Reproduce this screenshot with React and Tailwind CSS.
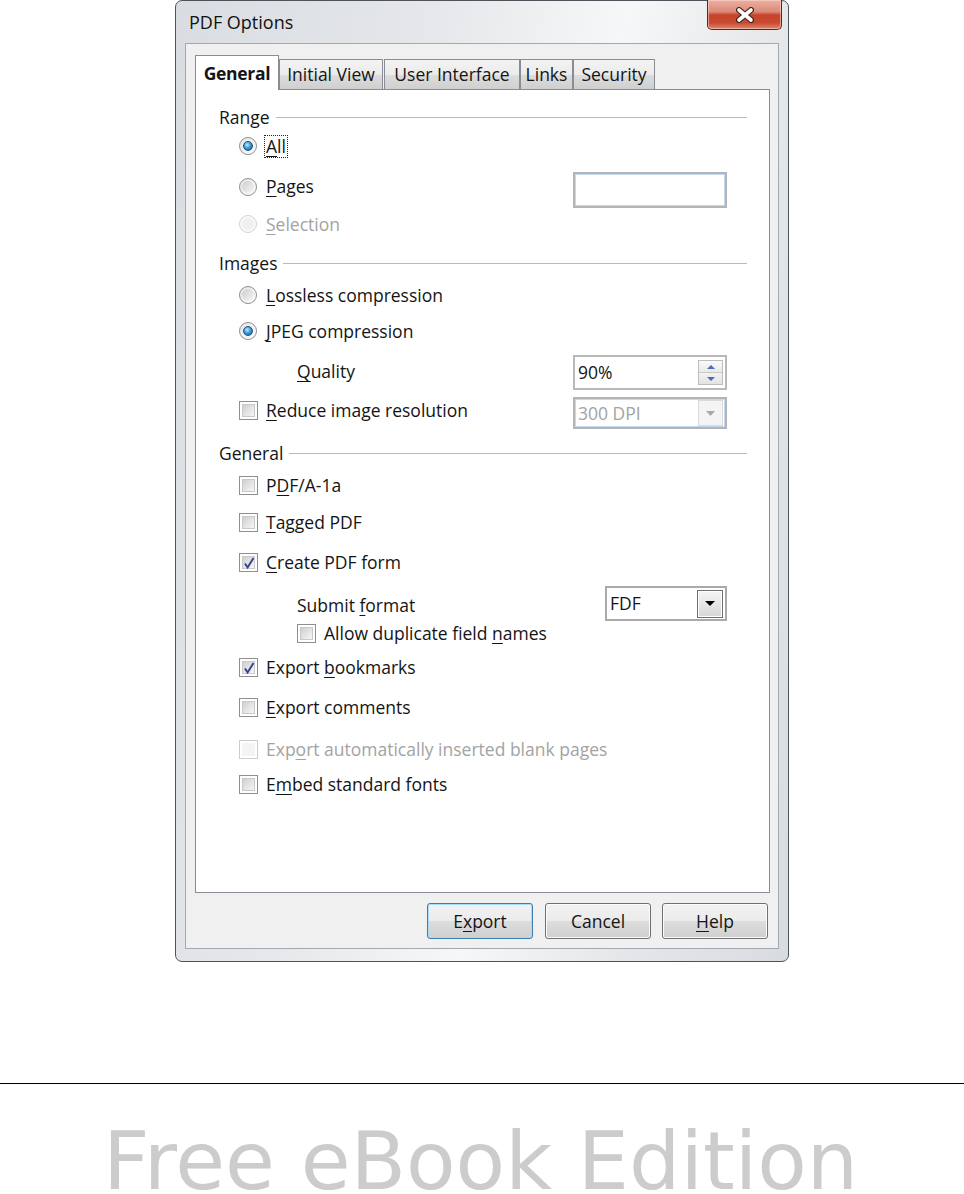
import React from "react";

const U = ({ children }) => (
  <span className="underline decoration-1 underline-offset-[3px]">{children}</span>
);

function Radio({ checked = false, disabled = false }) {
  if (disabled) {
    return (
      <span className="flex h-[18px] w-[18px] shrink-0 items-center justify-center rounded-full border border-[#d4d4d4] bg-[#f8f8f8]">
        <span className="h-[12px] w-[12px] rounded-full bg-[#f0f0f0]" />
      </span>
    );
  }
  return (
    <span className="flex h-[18px] w-[18px] shrink-0 items-center justify-center rounded-full border border-[#8e8f8f] bg-[linear-gradient(135deg,#e4e4e4,#ffffff)]">
      {checked ? (
        <span className="h-[10px] w-[10px] rounded-full border border-[#1b4f7e] bg-[radial-gradient(circle_at_40%_35%,#c4ecff_0%,#3d9ddb_45%,#14578c_100%)]" />
      ) : (
        <span className="h-[12px] w-[12px] rounded-full bg-[linear-gradient(135deg,#cdcdcd,#f7f7f7)]" />
      )}
    </span>
  );
}

function Check({ checked = false, disabled = false }) {
  return (
    <span
      className={
        disabled
          ? "relative flex h-[19px] w-[19px] shrink-0 items-center justify-center border border-[#cdcdcd] bg-white"
          : "relative flex h-[19px] w-[19px] shrink-0 items-center justify-center border border-[#8e8f8f] bg-white"
      }
    >
      <span
        className={
          disabled
            ? "h-[13px] w-[13px] bg-[#f4f4f4]"
            : "h-[13px] w-[13px] border border-[#c9c9c9] bg-[linear-gradient(135deg,#d0d0d0,#f6f6f6)]"
        }
      />
      {checked && (
        <svg className="absolute left-[2px] top-[2px]" width="14" height="14" viewBox="0 0 14 14">
          <path d="M3 7.5 L5.6 11.5 L11.5 2" fill="none" stroke="#34478a" strokeWidth="2" />
        </svg>
      )}
    </span>
  );
}

function Section({ title, mt }) {
  return (
    <div className={`${mt} flex h-[24px] items-center pl-[23px] pr-[22px]`}>
      <span>{title}</span>
      <span className="ml-[6px] h-px flex-1 bg-[#b9b9b9]" />
    </div>
  );
}

function Tri({ color = "#000", up = false, w = 9, h = 5 }) {
  return (
    <svg width={w} height={h} viewBox={`0 0 ${w} ${h}`}>
      {up ? (
        <polygon points={`0,${h} ${w},${h} ${w / 2},0`} fill={color} />
      ) : (
        <polygon points={`0,0 ${w},0 ${w / 2},${h}`} fill={color} />
      )}
    </svg>
  );
}

function Tab({ label, w, selected }) {
  if (selected) {
    return (
      <div
        className={`${w} relative z-10 -mb-px flex h-[35px] items-center justify-center border border-b-0 border-[#898c95] bg-white font-bold tracking-[-0.3px]`}
      >
        {label}
      </div>
    );
  }
  return (
    <div
      className={`${w} flex h-[30px] items-center justify-center border border-b-0 border-[#898c95] bg-[linear-gradient(#f3f3f3_0%,#ebebeb_50%,#dddddd_51%,#cfcfcf_100%)]`}
    >
      {label}
    </div>
  );
}

function Btn({ children, focused }) {
  return (
    <div
      className={
        focused
          ? "flex h-[36px] w-[106px] items-center justify-center rounded-[3px] border border-[#3c7fb1] bg-[linear-gradient(#f2f2f2_0%,#ebebeb_50%,#dddddd_51%,#cfcfcf_100%)] shadow-[inset_0_0_0_1px_#a8dcf6]"
          : "flex h-[36px] w-[106px] items-center justify-center rounded-[3px] border border-[#707070] bg-[linear-gradient(#f2f2f2_0%,#ebebeb_50%,#dddddd_51%,#cfcfcf_100%)] shadow-[inset_0_0_0_1px_#fbfbfb]"
      }
    >
      {children}
    </div>
  );
}

export default function App() {
  return (
    <div className="h-[1194px] w-[964px] bg-white font-['Open_Sans',sans-serif] text-[17.5px] text-[#141414]">
      {/* Window */}
      <div className="ml-[175px] flex h-[962px] w-[614px] flex-col rounded-[7px] border border-[#4d535a] bg-[linear-gradient(100deg,#d9dde1_0%,#e6e8eb_35%,#f6f7f8_58%,#e5e7ea_78%,#d8dce0_100%)]">
        {/* Title bar */}
        <div className="flex h-[42px] items-start">
          <div className="pl-[13px] pt-[10px] text-[18px] leading-[22px] text-[#111]">PDF Options</div>
          <div className="-mt-px ml-auto mr-[6px] flex h-[30px] w-[75px] items-center justify-center rounded-b-[5px] border border-t-0 border-[#5b2519] bg-[linear-gradient(#eab0a2_0%,#dc8b78_40%,#c7432c_52%,#c84a31_78%,#e0856c_100%)] shadow-[inset_0_0_0_1px_rgba(255,220,210,0.55)]">
            <svg width="22" height="16" viewBox="0 0 22 16">
              <path d="M5 3 L17 13 M17 3 L5 13" stroke="#45231c" strokeWidth="6" strokeLinecap="round" />
              <path d="M5 3 L17 13 M17 3 L5 13" stroke="#ffffff" strokeWidth="3.6" strokeLinecap="round" />
            </svg>
          </div>
        </div>

        {/* Client area */}
        <div className="mx-[9px] flex h-[906px] flex-col border border-[#a3a9b0] bg-[#f0f0f0]">
          {/* Tabs */}
          <div className="ml-[9px] mt-[11px] flex h-[34px] items-end">
            <Tab label="General" w="w-[84px]" selected />
            <Tab label="Initial View" w="w-[104px]" />
            <div className="w-px" />
            <Tab label="User Interface" w="w-[136px]" />
            <Tab label="Links" w="w-[53px]" />
            <Tab label="Security" w="w-[82px]" />
          </div>

          {/* Pane */}
          <div className="ml-[9px] flex h-[804px] w-[575px] flex-col border border-[#898c95] bg-white">
            <Section title="Range" mt="mt-[15px]" />

            <div className="mt-[5px] flex h-[24px] items-center pl-[43px]">
              <Radio checked />
              <span className="ml-[7px] border border-dotted border-[#222] px-px leading-[21px]">
                <U>A</U>ll
              </span>
            </div>

            <div className="mt-[14px] flex h-[36px] items-start pl-[43px]">
              <div className="flex h-[29px] w-[334px] items-center">
                <Radio />
                <span className="ml-[9px]">
                  <U>P</U>ages
                </span>
              </div>
              <div className="h-[36px] w-[154px] border-2 border-[#b4b4b4] bg-white shadow-[inset_0_0_0_1px_#c3d9f1]" />
            </div>

            <div className="mt-[4px] flex h-[24px] items-center pl-[43px] text-[#a3a3a3]">
              <Radio disabled />
              <span className="ml-[9px]">
                <U>S</U>election
              </span>
            </div>

            <Section title="Images" mt="mt-[15px]" />

            <div className="mt-[8px] flex h-[24px] items-center pl-[43px]">
              <Radio />
              <span className="ml-[9px]">
                <U>L</U>ossless compression
              </span>
            </div>

            <div className="mt-[12px] flex h-[24px] items-center pl-[43px]">
              <Radio checked />
              <span className="ml-[9px]">
                <U>J</U>PEG compression
              </span>
            </div>

            <div className="mt-[12px] flex h-[35px] items-start pl-[101px]">
              <div className="flex h-[32px] w-[276px] items-center">
                <span>
                  <U>Q</U>uality
                </span>
              </div>
              <div className="flex h-[35px] w-[154px] items-center border-2 border-[#b9b9b9] bg-white pl-[3px]">
                <span className="flex-1">90%</span>
                <div className="mr-[2px] flex h-[25px] w-[25px] flex-col border border-[#bdbdbd]">
                  <div className="flex flex-1 items-center justify-center border-b border-[#c9c9c9] bg-[linear-gradient(#fafafa,#e9e9e9)]">
                    <Tri up color="#4a6db5" w={8} h={4} />
                  </div>
                  <div className="flex flex-1 items-center justify-center bg-[linear-gradient(#f3f3f3,#e2e2e2)]">
                    <Tri color="#4a6db5" w={8} h={4} />
                  </div>
                </div>
              </div>
            </div>

            <div className="mt-[7px] flex h-[32px] items-start pl-[43px]">
              <div className="flex h-[26px] w-[334px] items-center">
                <Check />
                <span className="ml-[8px]">
                  <U>R</U>educe image resolution
                </span>
              </div>
              <div className="flex h-[32px] w-[154px] items-center border-2 border-[#b4b4b4] bg-white pl-[3px] shadow-[inset_0_0_0_1px_#c3d9f1]">
                <span className="flex-1 text-[#a3a3a3]">300 DPI</span>
                <div className="mr-[2px] flex h-[26px] w-[25px] items-center justify-center border border-[#d9d9d9] bg-[#f4f4f4]">
                  <Tri color="#a9a9a9" w={9} h={5} />
                </div>
              </div>
            </div>

            <Section title="General" mt="mt-[12px]" />

            <div className="mt-[8px] flex h-[24px] items-center pl-[43px]">
              <Check />
              <span className="ml-[8px]">
                P<U>D</U>F/A-1a
              </span>
            </div>

            <div className="mt-[13px] flex h-[24px] items-center pl-[43px]">
              <Check />
              <span className="ml-[8px]">
                <U>T</U>agged PDF
              </span>
            </div>

            <div className="mt-[16px] flex h-[24px] items-center pl-[43px]">
              <Check checked />
              <span className="ml-[8px]">
                <U>C</U>reate PDF form
              </span>
            </div>

            <div className="mt-[12px] flex h-[35px] items-start pl-[101px]">
              <div className="flex h-[38px] w-[308px] shrink-0 items-center">
                <span>
                  Submit <U>f</U>ormat
                </span>
              </div>
              <div className="flex h-[35px] w-[122px] items-center border-2 border-[#a9a9a9] bg-white pl-[3px]">
                <span className="flex-1">FDF</span>
                <div className="mr-[2px] flex h-[28px] w-[26px] items-center justify-center border border-[#6f6f6f] bg-[linear-gradient(#f6f6f6,#d6d6d6)] shadow-[inset_0_0_0_1px_#ffffff]">
                  <Tri color="#000" w={10} h={5} />
                </div>
              </div>
            </div>

            <div className="flex h-[24px] items-center pl-[101px]">
              <Check />
              <span className="ml-[8px]">
                Allow duplicate field <U>n</U>ames
              </span>
            </div>

            <div className="mt-[10px] flex h-[24px] items-center pl-[43px]">
              <Check checked />
              <span className="ml-[8px]">
                Export <U>b</U>ookmarks
              </span>
            </div>

            <div className="mt-[16px] flex h-[24px] items-center pl-[43px]">
              <Check />
              <span className="ml-[8px]">
                <U>E</U>xport comments
              </span>
            </div>

            <div className="mt-[18px] flex h-[24px] items-center pl-[43px] text-[#a3a3a3]">
              <Check disabled />
              <span className="ml-[8px]">
                Exp<U>o</U>rt automatically inserted blank pages
              </span>
            </div>

            <div className="mt-[11px] flex h-[24px] items-center pl-[43px]">
              <Check />
              <span className="ml-[8px]">
                E<U>m</U>bed standard fonts
              </span>
            </div>
          </div>

          {/* Buttons */}
          <div className="mr-[10px] mt-[10px] flex justify-end">
            <Btn focused>
              E<U>x</U>port
            </Btn>
            <div className="w-[12px]" />
            <Btn>Cancel</Btn>
            <div className="w-[11px]" />
            <Btn>
              <U>H</U>elp
            </Btn>
          </div>
        </div>
      </div>

      {/* Footer */}
      <div className="mt-[121px] h-px w-full bg-black" />
      <div className="ml-[103px] mt-[45px] h-[64px] font-['DejaVu_Sans',sans-serif] text-[81px] leading-[64px] text-[#cccccc]">
        Free eBook Edition
      </div>
    </div>
  );
}
